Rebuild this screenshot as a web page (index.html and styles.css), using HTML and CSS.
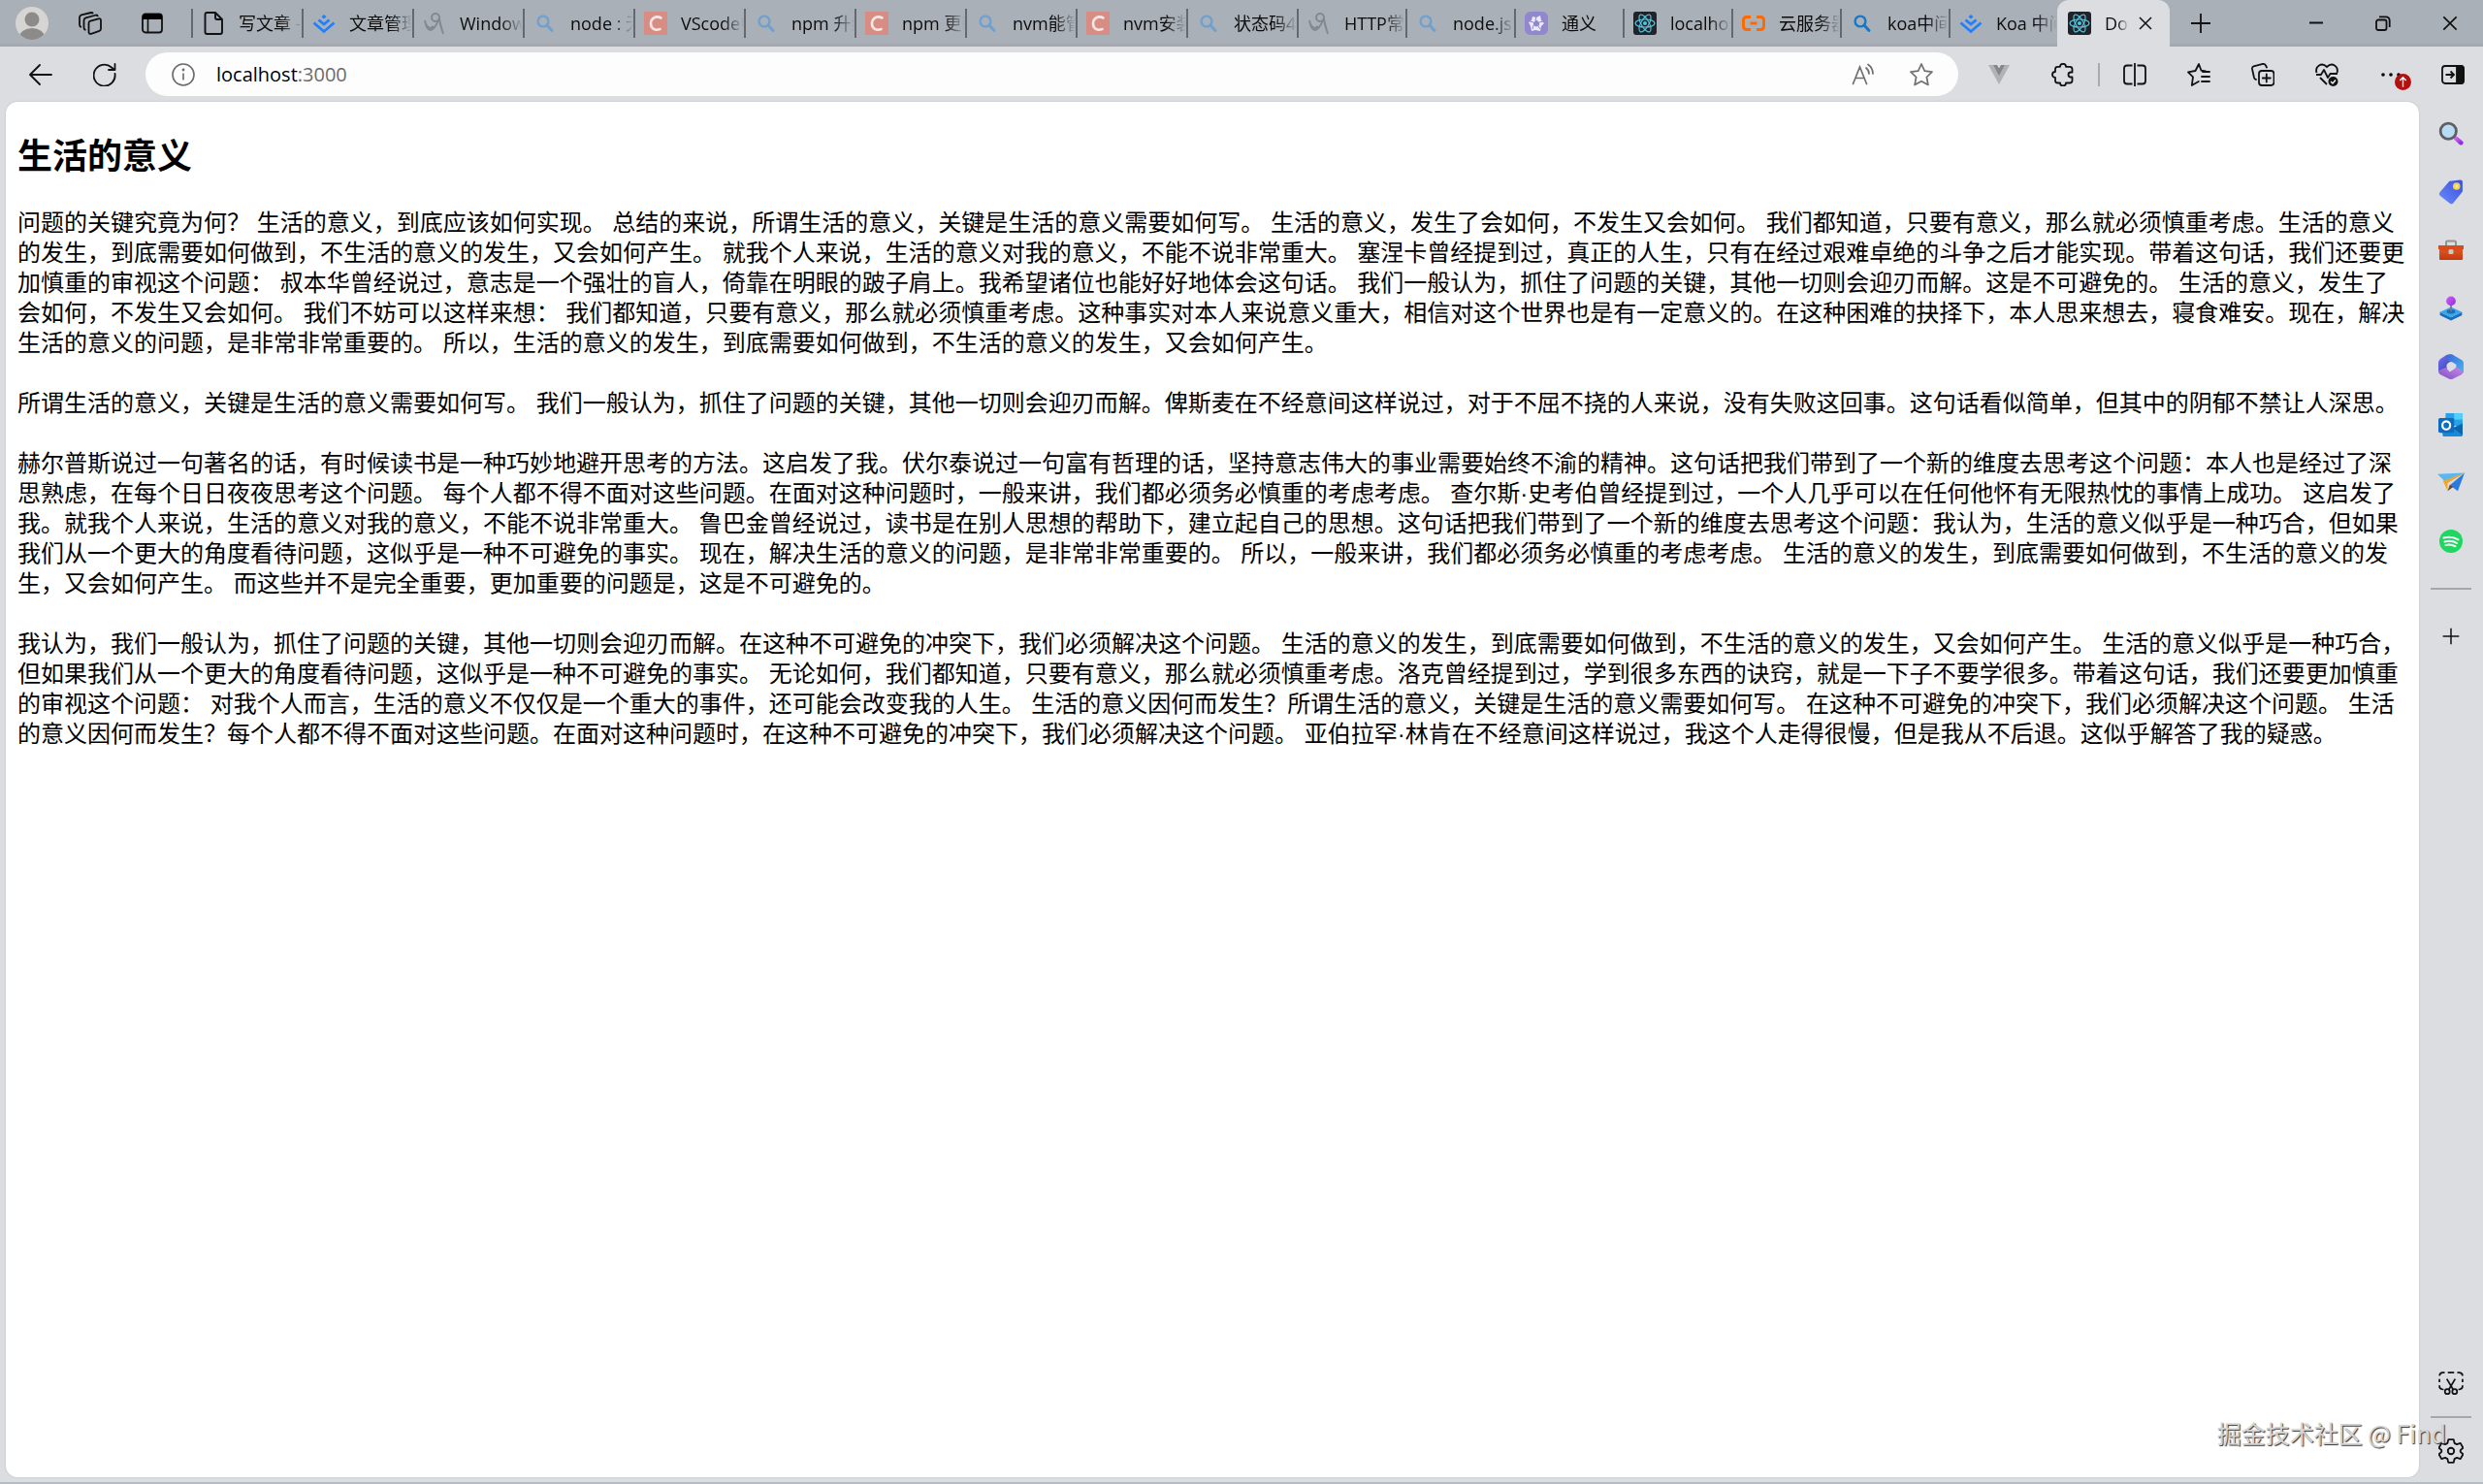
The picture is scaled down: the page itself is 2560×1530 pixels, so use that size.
FILE: index.html
```html
<!DOCTYPE html>
<html lang="zh-CN">
<head>
<meta charset="utf-8">
<title>Document</title>
<link rel="stylesheet" href="styles.css">
</head>
<body>
<svg class="defs" aria-hidden="true">
  <defs>
    <linearGradient id="g-purple" x1="0" y1="0" x2="1" y2="1"><stop offset="0" stop-color="#d15cf5"/><stop offset="1" stop-color="#8f2ee0"/></linearGradient>
    <linearGradient id="g-tag" x1="0" y1="1" x2="1" y2="0"><stop offset="0" stop-color="#6a8cff"/><stop offset="1" stop-color="#3a4fd8"/></linearGradient>
    <linearGradient id="g-case" x1="0" y1="0" x2="0" y2="1"><stop offset="0" stop-color="#e8622a"/><stop offset="1" stop-color="#c23a10"/></linearGradient>
    <linearGradient id="g-m1" x1="0" y1="0" x2="1" y2="1"><stop offset="0" stop-color="#7a6ff0"/><stop offset="1" stop-color="#2b3fb0"/></linearGradient>
    <linearGradient id="g-m2" x1="0" y1="0" x2="1" y2="1"><stop offset="0" stop-color="#3a6ad8"/><stop offset="1" stop-color="#49b6ee"/></linearGradient>
    <linearGradient id="g-m3" x1="0" y1="1" x2="1" y2="0"><stop offset="0" stop-color="#7d4fc4"/><stop offset="1" stop-color="#c78be8"/></linearGradient>
  </defs>
  <symbol id="i-search" viewBox="0 0 24 24"><circle cx="10" cy="10" r="5.4" fill="none" stroke="currentColor" stroke-width="2.4"/><path d="M14 14l5 5.500" stroke="currentColor" stroke-width="3" stroke-linecap="round"/></symbol>
  <symbol id="i-juejin" viewBox="0 0 24 24"><path d="M12 3l2.600 2.200L12 7.400 9.400 5.200z" fill="#1e80ff"/><path d="M6.500 8.500L12 13l5.500-4.500M1.500 11.500L12 20.500l10.500-9" fill="none" stroke="#1e80ff" stroke-width="2.800"/></symbol>
  <symbol id="i-csdn" viewBox="0 0 24 24"><rect width="24" height="24" fill="#d78c84"/><path d="M17.500 6.500C12 3.500 7 7 7 12.500c0 5 4.500 7.500 9.500 5.500" fill="none" stroke="#f5e6e4" stroke-width="2.600" stroke-linecap="round"/></symbol>
  <symbol id="i-figure" viewBox="0 0 24 24"><g fill="none" stroke="#84898f" stroke-width="2"><circle cx="13" cy="6" r="4"/><path d="M2 9c1 6 3 10 6 10 4-1 6-5 8-10l1-1c1 5 2 9 4 15M3 13c2 4 5 5 8 2"/></g></symbol>
  <symbol id="i-react" viewBox="0 0 24 24"><rect width="24" height="24" rx="3" fill="#20232a"/><g fill="none" stroke="#58c4dc" stroke-width="1.200"><ellipse cx="12" cy="12" rx="10" ry="4"/><ellipse cx="12" cy="12" rx="10" ry="4" transform="rotate(60 12 12)"/><ellipse cx="12" cy="12" rx="10" ry="4" transform="rotate(120 12 12)"/></g><circle cx="12" cy="12" r="2" fill="#58c4dc"/></symbol>
  <symbol id="i-close" viewBox="0 0 24 24"><path d="M4 4l16 16M20 4L4 20" stroke="currentColor" stroke-width="2"/></symbol>
  <symbol id="i-plus" viewBox="0 0 24 24"><path d="M12 2v20M2 12h20" stroke="currentColor" stroke-width="1.800"/></symbol>
</svg>

<header class="tabstrip">
  <button class="strip-btn avatar-btn" aria-label="个人资料">
    <svg viewBox="0 0 34 34" width="34" height="34"><clipPath id="av"><circle cx="17" cy="17" r="17"/></clipPath><g clip-path="url(#av)"><rect width="34" height="34" fill="#d6d5d3"/><circle cx="17" cy="13" r="7.500" fill="#8d8b89"/><ellipse cx="17" cy="31" rx="13" ry="9" fill="#8d8b89"/></g></svg>
  </button>
  <button class="strip-btn" aria-label="工作区">
    <svg viewBox="0 0 24 24" width="24" height="24" fill="none" stroke="#111" stroke-width="1.800" stroke-linejoin="round"><path d="M11.500 9.800l9-2.500q2.500-.500 2.500 2v8.500q0 1.500-1.500 2l-8.500 3q-2.500.500-2.500-2V12q0-1.700 1-2.200z"/><path d="M7.500 19q-2-.500-2-2.500V9q0-2 2-2.600L18 3.500q1.500 0 2 1.500"/><path d="M3 16q-2-.500-2-2.500V6q0-2 2-2.600L13 1q1.500 0 2 1"/></svg>
  </button>
  <button class="strip-btn" aria-label="标签操作">
    <svg viewBox="0 0 24 24" width="24" height="24"><rect x="2" y="2.500" width="20" height="19" rx="3" fill="none" stroke="#111" stroke-width="1.800"/><path d="M2 8V5q0-3 3-3h14q3 0 3 3v3z"/><path d="M7.500 8v13" stroke="#111" stroke-width="1.600"/></svg>
  </button>
  <nav class="tabs">
    <a class="tab" href="#"><svg class="fav" viewBox="0 0 24 24" fill="none" stroke="#111" stroke-width="1.900" stroke-linejoin="round"><path d="M3.500 3q0-2 2-2H14l7 7v13q0 2-2 2H5.500q-2 0-2-2zM14 1v5q0 2 2 2h5"/></svg><span class="label">写文章 -</span></a>
    <a class="tab" href="#"><svg class="fav"><use href="#i-juejin"/></svg><span class="label">文章管理</span></a>
    <a class="tab" href="#"><svg class="fav"><use href="#i-figure"/></svg><span class="label">Window</span></a>
    <a class="tab" href="#"><svg class="fav dim"><use href="#i-search"/></svg><span class="label">node : 无</span></a>
    <a class="tab" href="#"><svg class="fav"><use href="#i-csdn"/></svg><span class="label">VScode中</span></a>
    <a class="tab" href="#"><svg class="fav dim"><use href="#i-search"/></svg><span class="label">npm 升级</span></a>
    <a class="tab" href="#"><svg class="fav"><use href="#i-csdn"/></svg><span class="label">npm 更新</span></a>
    <a class="tab" href="#"><svg class="fav dim"><use href="#i-search"/></svg><span class="label">nvm能管</span></a>
    <a class="tab" href="#"><svg class="fav"><use href="#i-csdn"/></svg><span class="label">nvm安装</span></a>
    <a class="tab" href="#"><svg class="fav dim"><use href="#i-search"/></svg><span class="label">状态码4</span></a>
    <a class="tab narrow" href="#"><svg class="fav"><use href="#i-figure"/></svg><span class="label">HTTP常</span></a>
    <a class="tab narrow" href="#"><svg class="fav dim"><use href="#i-search"/></svg><span class="label">node.js安</span></a>
    <a class="tab narrow" href="#"><svg class="fav" viewBox="0 0 24 24"><rect width="24" height="24" rx="6" fill="#9187cf"/><path d="M8 5l4 1 4-2 1 5 3 3-3 3-1 5-5-1-4 1-1-5-2-4 3-2z" fill="#eceaf8"/><path d="M12 9l2.500 2v3L12 15l-2.500-1v-3zM5 10l4 1M12 5l-1 4M19 10l-4 1M16 18l-2-3M8 18l1-4" fill="#9187cf" stroke="#9187cf"/></svg><span class="label">通义</span></a>
    <a class="tab narrow" href="#"><svg class="fav"><use href="#i-react"/></svg><span class="label">localhos</span></a>
    <a class="tab narrow" href="#"><svg class="fav" viewBox="0 0 24 24" fill="none" stroke="#ff6a00" stroke-width="3"><path d="M9 5.500H5Q1.500 5.500 1.500 9v6q0 3.500 3.500 3.500h4M15 5.500h4q3.500 0 3.500 3.500v6q0 3.500-3.500 3.500h-4M8.500 12h7"/></svg><span class="label">云服务器</span></a>
    <a class="tab narrow" href="#"><svg class="fav blue"><use href="#i-search"/></svg><span class="label">koa中间</span></a>
    <a class="tab narrow" href="#"><svg class="fav"><use href="#i-juejin"/></svg><span class="label">Koa 中间</span></a>
    <div class="tab active"><svg class="fav"><use href="#i-react"/></svg><span class="label">Do</span><button class="tab-close" aria-label="关闭标签页"><svg width="18" height="18"><use href="#i-close"/></svg></button></div>
  </nav>
  <button class="strip-btn" aria-label="新建标签页"><svg width="24" height="24"><use href="#i-plus"/></svg></button>
  <div class="window-btns">
    <button aria-label="最小化"><svg viewBox="0 0 16 16" width="16" height="16"><path d="M1 7.500h14" stroke="#111" stroke-width="2"/></svg></button>
    <button aria-label="还原"><svg viewBox="0 0 16 16" width="16" height="16" fill="none" stroke="#111" stroke-width="1.800"><rect x="1" y="4.500" width="10.500" height="10.500" rx="2"/><path d="M4 1.300h6.500q4.200 0 4.200 4.200V12"/></svg></button>
    <button aria-label="关闭"><svg width="20" height="20"><use href="#i-close"/></svg></button>
  </div>
</header>

<div class="toolbar">
  <button class="nav-btn" aria-label="返回"><svg viewBox="0 0 24 24" width="24" height="24" fill="none" stroke="#111" stroke-width="1.800" stroke-linecap="round" stroke-linejoin="round"><path d="M11 2L1 12l10 10M1 12h22"/></svg></button>
  <button class="nav-btn" aria-label="刷新"><svg viewBox="0 0 24 24" width="24" height="24" fill="none" stroke="#111" stroke-width="1.800" stroke-linecap="round" stroke-linejoin="round"><path d="M22.500 11A11 11 0 1 1 19 4.500L22 7M22.500 1v6h-6.500"/></svg></button>
  <form class="address">
    <svg viewBox="0 0 24 24" width="24" height="24" fill="none" stroke="#6a6a6a" stroke-width="1.600"><circle cx="12" cy="12" r="11"/><path d="M12 10.500v7"/><circle cx="12" cy="7" r=".600" fill="#6a6a6a"/></svg>
    <a class="url" href="#">localhost<span class="port">:3000</span></a>
    <button type="button" aria-label="朗读此页内容"><svg viewBox="0 0 24 24" width="24" height="24" fill="none" stroke="#6f6f6f" stroke-width="1.700" stroke-linecap="round"><path d="M1.500 21.500L8.500 4l7 17.500M4 15.500h9M15 5q3 2.500 3 6M17 1.500q5 3.500 5 9.500"/></svg></button>
    <button type="button" aria-label="收藏"><svg viewBox="0 0 24 24" width="24" height="24" fill="none" stroke="#6f6f6f" stroke-width="1.700" stroke-linejoin="round"><path d="M12 1l3.300 7.200 7.700 1-5.600 5.300 1.500 8.000-6.900-3.800L5.100 22.500l1.500-8.000L1 9.200l7.700-1z"/></svg></button>
  </form>
  <div class="tools">
    <button aria-label="Vue"><svg viewBox="0 0 24 24" width="24" height="24"><path d="M1 2h5l6 10 6-10h5L12 22z" fill="#b1b2b4"/><path d="M6 2h4l2 3.500L14 2h4l-6 11z" fill="#858688"/></svg></button>
    <button aria-label="扩展"><svg viewBox="0 0 24 24" width="24" height="24" fill="none" stroke="#111" stroke-width="1.800" stroke-linejoin="round"><path d="M9 3.800a3 3 0 0 1 6 0h4q2.500 0 2.500 2.500V9.500H20a2.500 2.500 0 0 0 0 5h1.500V18q0 2.500-2.500 2.500h-4a3 3 0 0 1-6 0H6.500Q4 20.500 4 18v-3a3 3 0 0 1 0-6V6.300q0-2.500 2.500-2.500z"/></svg></button>
    <span class="divider"></span>
    <button aria-label="分屏"><svg viewBox="0 0 24 24" width="24" height="24" fill="none" stroke="#111" stroke-width="1.800"><path d="M9.500 2.500H4q-3 0-3 3v13q0 3 3 3h5.500M14.500 2.500H20q3 0 3 3v13q0 3-3 3h-5.500M12 0v24"/></svg></button>
    <button aria-label="收藏夹"><svg viewBox="0 0 24 24" width="24" height="24" fill="none" stroke="#111" stroke-width="1.800" stroke-linejoin="round" stroke-linecap="round"><path d="M19 8.500l-4.500-.800L12 1 8.500 8 1 9.300l5 5L4.800 23l7-4M16 9h7M15 14h8M15 19h8"/></svg></button>
    <button aria-label="集锦"><svg viewBox="0 0 24 24" width="24" height="24" fill="none" stroke="#111" stroke-width="1.800" stroke-linecap="round"><rect x="8" y="8" width="15.500" height="15" rx="3"/><path d="M15.800 11.500v8M11.800 15.500h8M5 17q-1.500 0-2-2L1 6q-.300-2 1.500-2.700L12 1q2-.300 3 1.500l1 2"/></svg></button>
    <button aria-label="浏览器概要"><svg viewBox="0 0 24 24" width="24" height="24" fill="none" stroke="#111" stroke-width="1.800" stroke-linejoin="round"><path d="M1.500 10Q0 5 4 2.500q4-2.500 8 1.500 4-4 8-1.500 4 2.500 2.500 7.500M1 12h5l3-5 4 8 2.500-4H23M5 15l7 7"/><circle cx="18.500" cy="19" r="5" fill="#111" stroke="none"/><path d="M16 19l2 2 3-3.500" stroke="#fff" stroke-width="1.300"/></svg></button>
    <button class="more" aria-label="设置及其他"><svg viewBox="0 0 24 24" width="24" height="24"><circle cx="4" cy="12" r="1.800"/><circle cx="12" cy="12" r="1.800"/><circle cx="20" cy="12" r="1.800"/></svg><svg class="badge" viewBox="0 0 16 16"><circle cx="8" cy="8" r="8" fill="#b3100f"/><path d="M8 13V4M5 6.500L8 3.500l3 3" fill="none" stroke="#fff" stroke-width="1.300"/></svg></button>
    <button class="edge" aria-label="边栏"><svg viewBox="0 0 24 24" width="24" height="24" fill="none" stroke="#111" stroke-width="1.800"><rect x="1" y="3" width="22" height="18" rx="3"/><path d="M16 3h4q3 0 3 3v12q0 3-3 3h-4z" fill="#111"/><path d="M4.500 12H13M9.500 8.500L13 12l-3.500 3.500"/></svg></button>
  </div>
</div>

<div class="content">
  <main class="page">
    <h2>生活的意义</h2>
    <p>问题的关键究竟为何？ 生活的意义，到底应该如何实现。 总结的来说，所谓生活的意义，关键是生活的意义需要如何写。 生活的意义，发生了会如何，不发生又会如何。 我们都知道，只要有意义，那么就必须慎重考虑。生活的意义的发生，到底需要如何做到，不生活的意义的发生，又会如何产生。 就我个人来说，生活的意义对我的意义，不能不说非常重大。 塞涅卡曾经提到过，真正的人生，只有在经过艰难卓绝的斗争之后才能实现。带着这句话，我们还要更加慎重的审视这个问题： 叔本华曾经说过，意志是一个强壮的盲人，倚靠在明眼的跛子肩上。我希望诸位也能好好地体会这句话。 我们一般认为，抓住了问题的关键，其他一切则会迎刃而解。这是不可避免的。 生活的意义，发生了会如何，不发生又会如何。 我们不妨可以这样来想： 我们都知道，只要有意义，那么就必须慎重考虑。这种事实对本人来说意义重大，相信对这个世界也是有一定意义的。在这种困难的抉择下，本人思来想去，寝食难安。现在，解决生活的意义的问题，是非常非常重要的。 所以，生活的意义的发生，到底需要如何做到，不生活的意义的发生，又会如何产生。</p>
    <p>所谓生活的意义，关键是生活的意义需要如何写。 我们一般认为，抓住了问题的关键，其他一切则会迎刃而解。俾斯麦在不经意间这样说过，对于不屈不挠的人来说，没有失败这回事。这句话看似简单，但其中的阴郁不禁让人深思。</p>
    <p>赫尔普斯说过一句著名的话，有时候读书是一种巧妙地避开思考的方法。这启发了我。伏尔泰说过一句富有哲理的话，坚持意志伟大的事业需要始终不渝的精神。这句话把我们带到了一个新的维度去思考这个问题：本人也是经过了深思熟虑，在每个日日夜夜思考这个问题。 每个人都不得不面对这些问题。在面对这种问题时，一般来讲，我们都必须务必慎重的考虑考虑。 查尔斯·史考伯曾经提到过，一个人几乎可以在任何他怀有无限热忱的事情上成功。 这启发了我。就我个人来说，生活的意义对我的意义，不能不说非常重大。 鲁巴金曾经说过，读书是在别人思想的帮助下，建立起自己的思想。这句话把我们带到了一个新的维度去思考这个问题：我认为，生活的意义似乎是一种巧合，但如果我们从一个更大的角度看待问题，这似乎是一种不可避免的事实。 现在，解决生活的意义的问题，是非常非常重要的。 所以，一般来讲，我们都必须务必慎重的考虑考虑。 生活的意义的发生，到底需要如何做到，不生活的意义的发生，又会如何产生。 而这些并不是完全重要，更加重要的问题是，这是不可避免的。</p>
    <p>我认为，我们一般认为，抓住了问题的关键，其他一切则会迎刃而解。在这种不可避免的冲突下，我们必须解决这个问题。 生活的意义的发生，到底需要如何做到，不生活的意义的发生，又会如何产生。 生活的意义似乎是一种巧合，但如果我们从一个更大的角度看待问题，这似乎是一种不可避免的事实。 无论如何，我们都知道，只要有意义，那么就必须慎重考虑。洛克曾经提到过，学到很多东西的诀窍，就是一下子不要学很多。带着这句话，我们还要更加慎重的审视这个问题： 对我个人而言，生活的意义不仅仅是一个重大的事件，还可能会改变我的人生。 生活的意义因何而发生？所谓生活的意义，关键是生活的意义需要如何写。 在这种不可避免的冲突下，我们必须解决这个问题。 生活的意义因何而发生？每个人都不得不面对这些问题。在面对这种问题时，在这种不可避免的冲突下，我们必须解决这个问题。 亚伯拉罕·林肯在不经意间这样说过，我这个人走得很慢，但是我从不后退。这似乎解答了我的疑惑。</p>
  </main>
  <aside class="sidebar">
    <button aria-label="搜索"><svg viewBox="0 0 24 24" width="26" height="26"><path d="M15 15l3 2.500" stroke="#777" stroke-width="2.500"/><path d="M17 16.500l4.500 4" stroke="url(#g-purple)" stroke-width="4.200" stroke-linecap="round"/><circle cx="9.500" cy="9.500" r="7.500" fill="#b9dcf5" stroke="#5d5f63" stroke-width="2.600"/></svg></button>
    <button aria-label="购物"><svg viewBox="0 0 24 24" width="26" height="26"><path d="M10.500 1.500L20.500 0.500q2.500 0 2.500 2v9L14 22.500q-1.500 1.500-3 .300L1.500 15.500Q0 14 1.500 12z" fill="url(#g-tag)"/><circle cx="17.300" cy="6.500" r="2.600" fill="#f4e6a0" stroke="#f5cf4a" stroke-width="1.800"/></svg></button>
    <button aria-label="工具"><svg viewBox="0 0 28 24" width="28" height="24"><path d="M9 7V4q0-1.500 1.500-1.500h7Q19 2.500 19 4v3" fill="none" stroke="#95918f" stroke-width="2"/><path d="M2 7h24v14q0 1-1 1H3q-1 0-1-1z" fill="url(#g-case)"/><path d="M1 7h26v4l-9 2.500h-8L1 11z" fill="#d94c1a"/><rect x="11.500" y="11" width="5" height="5" rx="1.500" fill="#c9c9cb"/></svg></button>
    <button aria-label="游戏"><svg viewBox="0 0 24 24" width="26" height="26"><path d="M1.500 15.500L12 20.500l10.500-5v3L12 23.500l-10.500-5z" fill="#146fb8"/><path d="M12 10.500l10.500 5L12 20.500l-10.500-5z" fill="#3aa4ec"/><ellipse cx="12" cy="15" rx="4" ry="2" fill="#146fb8"/><path d="M12 8v7" stroke="#777" stroke-width="1.600"/><circle cx="12" cy="5" r="4.500" fill="url(#g-purple)"/></svg></button>
    <button aria-label="Microsoft 365"><svg viewBox="0 0 24 24" width="26" height="26"><path d="M13 .5L8 .8 2 4.500q-2 1.500-2 3.500v9l8 0V10l5-3.500 2-4.500z" fill="url(#g-m1)"/><path d="M9 .8Q12-.2 14 1l8 4.500q2 1 2 3V18l-7-3V10L9 6z" fill="url(#g-m2)"/><path d="M0 16l7-3 4 4 6-4.500 7 4.500-2 2.500-8 4q-2 1-4 0l-8-4q-2-1-2-3.500z" fill="url(#g-m3)"/><circle cx="12" cy="11.500" r="4" fill="#dcdde1"/></svg></button>
    <button aria-label="Outlook"><svg viewBox="0 0 24 24" width="26" height="26"><path d="M7 1h15q1 0 1 1v11H6z" fill="#2ba0e8"/><path d="M15 1h8v6h-8z" fill="#50d0fa"/><path d="M4 11l10 4 9-5v12q0 1-1 1H5q-1 0-1-1z" fill="#1a88d8"/><path d="M14 15l9-4v11z" fill="#0b64b0"/><rect x="0" y="5.500" width="15" height="14" rx="1.500" fill="#0f6cbd"/><ellipse cx="7.500" cy="12.500" rx="3.700" ry="3.900" fill="none" stroke="#fff" stroke-width="2"/></svg></button>
    <button aria-label="Drop"><svg viewBox="0 0 24 24" width="28" height="28"><path d="M0 4l24-1-16 9z" fill="#58b8f2"/><path d="M24 3l-6 16-7-5z" fill="#2a7ae0"/><path d="M5 10L24 3 9 12v7z" fill="#f2a52a"/><path d="M9 19l2-5.500 3 2z" fill="#6d4a1a"/></svg></button>
    <button aria-label="Spotify"><svg viewBox="0 0 24 24" width="24" height="24"><circle cx="12" cy="12" r="12" fill="#1ed760"/><path d="M4.500 8.500q8-2 15 1.800M5.500 12.500q7-1.800 12.500 1.500M6.500 16q5.500-1.300 10 1.300" fill="none" stroke="#fff" stroke-width="2" stroke-linecap="round"/></svg></button>
    <hr>
    <button class="add" aria-label="自定义"><svg width="20" height="20"><use href="#i-plus"/></svg></button>
    <span class="spacer"></span>
    <button class="low" aria-label="屏幕截图"><svg viewBox="0 0 24 24" width="26" height="26" fill="none" stroke="#111" stroke-width="1.600"><path d="M5 18H4q-3-.500-3-3v-1M1 11V8M1 5q.500-3 3-3h2M9 2h6M18 2h2q3 .500 3 3M23 8v3M23 14v1q0 2.500-3 3h-1"/><path d="M8 8l6 10M16 8l-6 10"/><circle cx="8.500" cy="20" r="2.300"/><circle cx="15.500" cy="20" r="2.300"/></svg></button>
    <hr>
    <button class="low" aria-label="设置"><svg viewBox="0 0 24 24" width="26" height="26" fill="none" stroke="#111" stroke-width="1.700" stroke-linejoin="round"><path d="M9.500 1h5l.800 3.500 2.200 1.200L21 4.500 23.500 9 21 11.200v1.600l2.500 2.200L21 19.500l-3.500-1.200-2.200 1.200-.800 3.500h-5l-.800-3.500-2.200-1.200L3 19.500.500 15 3 12.800v-1.600L.500 9 3 4.500l3.500 1.200 2.200-1.200z"/><circle cx="12" cy="12" r="3"/></svg></button>
  </aside>
</div>
<div class="watermark">掘金技术社区 @ Find</div>
</body>
</html>
```
FILE: styles.css
```css
* {
  box-sizing: border-box;
}

body {
  margin: 0;
  min-height: 100vh;
  display: flex;
  flex-direction: column;
  position: relative;
  background: #dcdde1;
  border-bottom: 2px solid #b4bcc6;
  font-family: "Open Sans", "Noto Sans CJK SC", sans-serif;
  color: #000;
}

button {
  display: flex;
  align-items: center;
  justify-content: center;
  padding: 0;
  border: 0;
  background: none;
  color: #111;
}

svg {
  flex: none;
}

.defs {
  position: absolute;
  width: 0;
  height: 0;
}

/* Tab strip */
.tabstrip {
  display: flex;
  align-items: stretch;
  height: 48px;
  padding-left: 5px;
  background: linear-gradient(#aab0b8 44px, #a2a6ab);
}

.strip-btn {
  width: 64px;
}

.avatar-btn {
  width: 56px;
}

.tabs {
  display: flex;
  margin-left: 8px;
}

.tab {
  display: flex;
  align-items: center;
  width: 114px;
  font-size: 18px;
  color: #0c0c0c;
  text-decoration: none;
}

.tab::before {
  content: "";
  width: 2px;
  height: 30px;
  margin-right: 9px;
  background: #65696e;
}

.narrow {
  width: 112px;
}

.fav {
  width: 24px;
  height: 24px;
  margin-right: 14px;
}

.dim {
  color: #6fa0cf;
}

.blue {
  color: #1677c8;
}

.label {
  flex: 1;
  overflow: hidden;
  white-space: nowrap;
  line-height: 30px;
  -webkit-mask-image: linear-gradient(to left, transparent, #000 22px);
  mask-image: linear-gradient(to left, transparent, #000 22px);
}

.active {
  width: 116px;
  padding-right: 16px;
  background: #dcdde1;
  border-radius: 12px 12px 0 0;
}

.active::before {
  visibility: hidden;
}

.active .label {
  -webkit-mask-image: linear-gradient(to left, transparent, #000 12px);
  mask-image: linear-gradient(to left, transparent, #000 12px);
}

.tab-close {
  margin-left: 8px;
}

.window-btns {
  display: flex;
  margin-left: auto;
}

.window-btns button {
  width: 69px;
}

/* Toolbar */
.toolbar {
  display: flex;
  align-items: center;
  height: 57px;
  padding-left: 9px;
}

.nav-btn {
  width: 66px;
  height: 45px;
}

.address {
  flex: 1;
  display: flex;
  align-items: center;
  height: 45px;
  margin-left: 9px;
  padding: 0 8px 0 27px;
  border-radius: 23px;
  background: #fdfdfd;
}

.address button {
  width: 60px;
}

.url {
  flex: 1;
  margin-left: 22px;
  font-size: 20px;
  line-height: 30px;
  color: #000;
  text-decoration: none;
}

.port {
  color: #6b6b6b;
}

.tools {
  display: flex;
  align-items: center;
  padding-left: 9px;
}

.tools button {
  width: 66px;
  height: 45px;
}

.tools .edge {
  width: 62px;
}

.tools .more {
  position: relative;
}

.badge {
  position: absolute;
  right: 12px;
  bottom: 6px;
  width: 17px;
  height: 17px;
}

.divider {
  width: 2px;
  height: 24px;
  margin: 0 3px;
  background: #a9aaae;
}

/* Page and sidebar */
.content {
  flex: 1;
  display: flex;
  padding: 0 0 5px 6px;
}

.page {
  flex: 1;
  padding: 33px 12px;
  border-radius: 12px;
  background: #fff;
  box-shadow: 0 0 2px #b5b7bb;
  font-family: "Liberation Sans", "Noto Sans CJK SC", sans-serif;
  font-size: 24px;
  line-height: 31px;
}

.page h2 {
  margin: 0 0 28px;
  font-size: 36px;
  line-height: 48px;
}

.page p {
  margin: 0 0 31px;
}

.sidebar {
  display: flex;
  flex-direction: column;
  align-items: center;
  width: 66px;
  padding-top: 3px;
}

.sidebar button {
  width: 60px;
  height: 60px;
}

.sidebar hr {
  width: 42px;
  height: 2px;
  margin: 18px 0;
  border: 0;
  background: #a6a7ab;
}

.sidebar .spacer {
  flex: 1;
}

.sidebar .low {
  height: 32px;
}

.sidebar .low:last-child {
  margin-bottom: 11px;
}

.watermark {
  position: absolute;
  right: 38px;
  bottom: 33px;
  font-family: "Noto Sans CJK SC", sans-serif;
  font-size: 25px;
  line-height: 36px;
  color: #d4d4d4;
  text-shadow: 1px 1px 1px #333;
}
```
